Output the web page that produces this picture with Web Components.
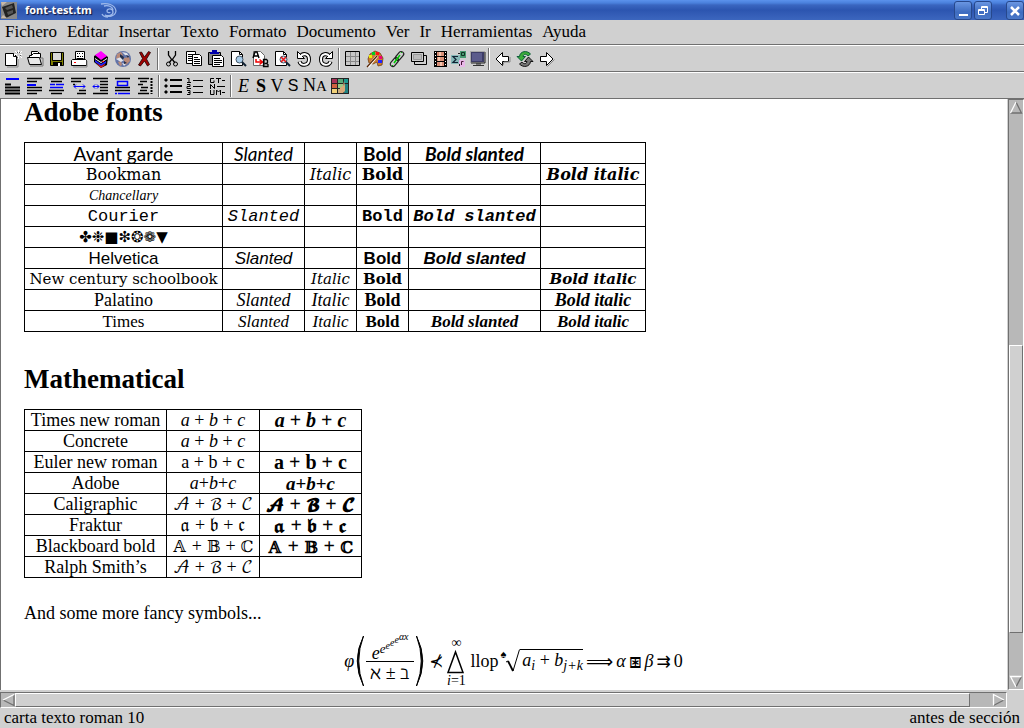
<!DOCTYPE html>
<html lang="es">
<head>
<meta charset="utf-8">
<title>font-test.tm</title>
<style>
  html, body { margin: 0; height: 100%; }
  body { font-family: "Liberation Serif", serif; color: #000; background: #d0d0d0; }
</style>
</head>
<body>
<app-window></app-window>

<script>
const ICONS = {
  new: `<path d="M2 4h8l3 3v9H2z" fill="#fff" stroke="#000" transform="translate(-.5 -.5)"/><path d="M9.500 3.500v3h3" fill="none" stroke="#000"/><path d="M3 17h11V8" fill="none" stroke="#888"/><path d="M14.500 0v3M14.500 6v3M10 4.500h3M16 4.500h2M11 1l2 2M16 6l2 2M18 1l-2 2" stroke="#fff"/><path d="M13 2h1v1h-1zM15 2h1v1h-1zM16 5h1v1h-1zM13 7h1v1h-1z" fill="#555"/>`,
  open: `<path d="M5.500 8V1.500h6l3 3V8" fill="#fff" stroke="#000"/><path d="M3.500 14V5.500h2l2-2h7v4" fill="#fff" stroke="#000"/><path d="M1.500 7.500h12l2 7h-12z" fill="#e8e8e8" stroke="#000"/><path d="M15 8h2v8H4" fill="none" stroke="#777"/>`,
  save: `<path d="M2 2h13v13H2z" fill="#808000" stroke="#000" transform="translate(.5 .5)"/><path d="M5 3h9v7H5z" fill="#d8d8d8"/><path d="M4.500 2.500v8h9v-8" fill="none" stroke="#000"/><path d="M5 12h9v4H5z" fill="#000"/><path d="M10 13h2v3h-2z" fill="#fff"/>`,
  print: `<path d="M5.500 9.500v-8h9v8" fill="#fff" stroke="#000"/><path d="M7 3h1v1H7zM9 3h1v1H9zM12 3h1v1h-1zM7 6h2v1H7zM10 6h1v1h-1zM12 6h1v1h-1z"/><path d="M2.500 9.500h13l1 1v5h-15v-5z" fill="#fff" stroke="#000"/><path d="M4 12h2v1H4z" fill="#f00"/><path d="M6.500 8.500h7" stroke="#000"/><path d="M3 17h14v-6" fill="none" stroke="#888"/>`,
  books: `<path d="M2 6l7-4 7 5-1 8-6 3-7-6z" fill="#000"/><path d="M3 5l6-4 6 5-6 4z" fill="#f0f"/><path d="M3 8l6 4 6-4v1l-6 4-6-4z" fill="#fff"/><path d="M3 10l6 4 5-3v2l-5 3-6-4z" fill="#22f"/><path d="M4 13l5 3 4-2v1l-4 3z" fill="#d22"/><path d="M10 11h2v1h-2z" fill="#f22"/>`,
  globe: `<circle cx="9" cy="9" r="8" fill="#6274a8"/><path d="M3 4l4-2 2 3-3 3-4 1zM10 8l5-1 1 4-4 4-2-3zM4 12l3-1 1 4-2 1z" fill="#b98a78"/><path d="M8 2l5 1 2 3-4-1zM2 9l5-2 3 3-3 2zM8 13l4 1-2 2z" fill="#dfe2ea"/><path d="M6 4l4 3-1 3-3-3zM12 5l3 1-1 2zM10 11l3 2-3 1z" fill="#26304a"/>`,
  close: `<path d="M3.500 2.500l2-.5 3 5 4-5.500 2 1-4 6.500 3 5.500-2 1.500-3-5-4 5-2-1 4-6.500z" fill="#a00000" stroke="#200" stroke-width=".8"/>`,
  cut: `<path d="M5.500 1v4l3.500 5M12.500 1v4L9 10M9 9l-3 4M9 9l3 4" fill="none" stroke="#000" stroke-width="1.300"/><circle cx="5.500" cy="14" r="2" fill="none" stroke="#000"/><circle cx="12.500" cy="14" r="2" fill="none" stroke="#000"/>`,
  copy: `<path d="M1.500 1.500h9v12h-9z" fill="#fff" stroke="#000"/><path d="M3 4.500h5M3 6.500h4M3 8.500h4M3 10.500h4" stroke="#000"/><path d="M7.500 4.500h7l2 2v9h-9z" fill="#fff" stroke="#000"/><path d="M9 7.500h4M9 9.500h6M9 11.500h6M9 13.500h6" stroke="#000"/>`,
  paste: `<path d="M1.500 2.500h12v12h-12z" fill="#888" stroke="#000"/><path d="M5 0h5v2h2v2H3V2h2z" fill="#00a"/><path d="M5.500 5.500h9l2 2v9h-11z" fill="#fff" stroke="#000"/><path d="M7 8.500h6M7 10.500h8M7 12.500h8M7 14.500h6" stroke="#000"/>`,
  preview: `<path d="M2.500 1.500h8l3 3v11h-11z" fill="#fff" stroke="#000"/><path d="M10.500 1.500v3h3" fill="none" stroke="#000"/><circle cx="10.500" cy="9.500" r="3.500" fill="#a8cdea" stroke="#456"/><path d="M13 12l4 4" stroke="#123" stroke-width="2"/>`,
  replace: `<path d="M2.500 1.500h7l4 4v10h-11z" fill="#fff" stroke="#666"/><path d="M2 8l2-6h2l2 6M3 6h4" fill="none" stroke="#000" stroke-width="1.400"/><path d="M5 9v3h6M8.500 9.500l3 2.500-3 2.500" fill="none" stroke="#e00" stroke-width="1.500"/><path d="M12.500 16.500v-7h3l1 1v2l-1 1h-2 2l1.500 1v2z" fill="none" stroke="#000" stroke-width="1.300"/>`,
  spell: `<path d="M2.500 1.500h8l3 3v11h-11z" fill="#fff" stroke="#000"/><path d="M10.500 1.500v3h3" fill="none" stroke="#000"/><circle cx="10.500" cy="9.500" r="3.500" fill="#cfe0ee" stroke="#456"/><path d="M8 7l5 5M13 7l-5 5" stroke="#e11" stroke-width="1.500"/><path d="M13 12l4 4" stroke="#123" stroke-width="2"/>`,
  undo: `<path d="M4.500 11.500c1 5 9.500 4.500 9.500-2C14 3 7.500 3 5.500 6.500" fill="none" stroke="#000" stroke-width="4"/><path d="M2.500 1.500v7h7z" fill="#fff" stroke="#000"/><path d="M4.500 11.500c1 5 9.500 4.500 9.500-2C14 3 7.500 3 5.500 6.500" fill="none" stroke="#fff" stroke-width="2"/>`,
  table: `<path d="M2 2h14v14H2z" fill="#c8c8c8"/><path d="M6.500 2v14M11.500 2v14M2 6.500h14M2 11.500h14" stroke="#888"/><path d="M1.500 1.500h14v14h-14z" fill="none" stroke="#000"/>`,
  palette: `<path d="M2 9l2-5 5-3 5 2 3 5-1 7-4 1-1-4-4 2-4-1z" fill="#c87c34" stroke="#744010" stroke-width=".8"/><path d="M3 5h3v3H3z" fill="#ee0"/><path d="M6 2h3v3H6z" fill="#0c2"/><path d="M10 2h3v3h-3z" fill="#f11"/><path d="M13 6h3v3h-3z" fill="#e07"/><path d="M12 10h4v3h-4z" fill="#22f"/><path d="M2 17l9-11" stroke="#fff" stroke-width="2.500"/><path d="M1 17l10-11" stroke="#520" stroke-width="1.200"/>`,
  link: `<g fill="none" stroke="#222" stroke-width="1.200" transform="rotate(40 9 9)"><rect x="6.500" y="0" width="5" height="10" rx="2.500"/><rect x="6.500" y="8" width="5" height="10" rx="2.500"/></g><path d="M6 13l6-8" stroke="#0c0" stroke-width="1.500"/><path d="M4 16l1-1M13 3l1-1" stroke="#0c0"/>`,
  rects: `<path d="M4.500 5.500h12v9h-12z" fill="none" stroke="#000"/><path d="M1.500 2.500h12v9h-12z" fill="#ccc" stroke="#000"/><path d="M3.500 4.500h8v5h-8z" fill="#bbb" stroke="#999"/>`,
  film: `<path d="M3 1h13v16H3z"/><path d="M6 2h7v4H6zM6 7h7v4H6zM6 12h7v4H6z" fill="#d89078"/><path d="M8 2h2v4H8zM7 7h2v4H7zM9 12h2v4H9z" fill="#f4c4ac"/><path d="M4.500 2v15M14.500 2v15" stroke="#fff" stroke-dasharray="1 2"/>`,
  math: `<path d="M1 5h9v9H1z" fill="#88b8b8"/><path d="M8 6.500H3l3 3-3 3h5" fill="none" stroke="#123" stroke-width="1.200"/><path d="M10 1h6v7h-6z" fill="#4a9a70"/><path d="M11.500 2.500h3v3h-3z" fill="none" stroke="#132"/><path d="M9 10h6v7H9z" fill="#e8b8e8"/><path d="M11.500 15v-3.500h2" fill="none" stroke="#413"/><path d="M8 3h2v1H8zM9 14h1v2H9z" fill="#222"/>`,
  monitor: `<path d="M1 1h15v12H1z" fill="#aaa"/><path d="M2 2h13v10H2z" fill="#3d3d66"/><path d="M3 3h10v8H3z" fill="#5c5c8c"/><path d="M7 13h5v2H7z" fill="#777"/><path d="M4 15h11v1H4z" fill="#333"/><path d="M16 2v11H2" fill="none" stroke="#222"/>`,
  left: `<path d="M8.500 2.500v4h6v5h-6v4L2 9z" fill="#fff" stroke="#000"/><path d="M9 15l1-3h6V7" fill="none" stroke="#888"/>`,
  refresh: `<path d="M1 6.500h2.500C4 1 11 0 14.500 4L12 6C10 3.500 7.500 4 7 6.500h2.500L5.500 11z" fill="#3cac3c" stroke="#053" stroke-width=".9"/><path d="M17 11.500h-2.500C14 17 7 18 3.500 14L6 12c2 2.500 4.500 2 5-.5H8.500L12.500 7z" fill="#777" stroke="#000" stroke-width=".9"/>`,
  right: `<path d="M8.500 2.500v4h-6v5h6v4L15 9z" fill="#fff" stroke="#000"/><path d="M9.500 16.500l7-7" fill="none" stroke="#888"/>`,
  title: `<path d="M1 7.500h6M1 10.500h15M1 13.500h15M1 16.500h15" stroke="#000" stroke-width="2"/><path d="M2 1h13v2H2z" fill="#00f"/>`,
  sect: `<path d="M1 1.500h15M1 4.500h10M1 10.500h15M1 13.500h15M1 16.500h10" stroke="#000" stroke-width="1.500"/><path d="M1 7h9v2H1z" fill="#00f"/>`,
  center: `<path d="M1 1.500h15M3 4.500h11M1 13.500h15M3 16.500h11" stroke="#000" stroke-width="1.500"/><path d="M2 7.500h5M8 7.500h8M2 10.500h13" stroke="#00f" stroke-width="1.500"/>`,
  indent: `<path d="M1 1.500h15M1 4.500h10M9 13.500h7M7 16.500h9M3 7.500h2" stroke="#000" stroke-width="1.500"/><path d="M4 9.500h11M6 7.500l-2 2 2 2M13 7.500l2 2-2 2" fill="none" stroke="#00f"/>`,
  inward: `<path d="M1 1.500h15M1 16.500h15M8 4.500h8M8 7.500h8M8 10.500h8M8 13.500h8" stroke="#000" stroke-width="1.500"/><path d="M1 9.500h6M3 7.500l-2 2 2 2M5 7.500l2 2-2 2" fill="none" stroke="#00f"/>`,
  frame: `<path d="M1 1.500h15M1 10.500h15M1 13.500h15" stroke="#000" stroke-width="1.500"/><path d="M3.500 4.500h10v4h-10zM1 16.500h2M4 16.500h12" fill="none" stroke="#00f" stroke-width="1.500"/>`,
  parts: `<path d="M2 1.500h11M4 4.500h7M2 7.500h5M5 10.500h7M4 13.500h7M2 16.500h11" stroke="#000" stroke-width="1.500"/><path d="M15.500 1v16" stroke="#000" stroke-width="2" stroke-dasharray="2 1"/>`,
  bullets: `<path d="M0 3l2-2 2 2-2 2zM0 9l2-2 2 2-2 2zM0 15l2-2 2 2-2 2zM6 2h12v2H6zM6 8h12v2H6zM6 14h12v2H6z"/>`,
  numbers: `<path d="M7 3.500h10M7 9.500h10M7 15.500h10M1 1.500h2v4M1 5.500h4M1 7.500h3v2H1v2h4M1 13.500h3v2H2h2v2H1" fill="none" stroke="#000"/>`,
  terms: `<path d="M6 1.500H2.500v4H6v-2M8 1.500h5M10.500 1v5M14 3.500h3M2.500 12V7.500l4 4V7M9 9.500h8M2.500 13v4.500H6V13M8.500 18v-5l2 2 2-2v5M14 15.500h3" fill="none" stroke="#000"/>`,
  colors: `<path d="M0 1h18v16H0z" fill="#222"/><path d="M1 2h5v4H1z" fill="#a83058"/><path d="M7 2h5v4H7z" fill="#58a878"/><path d="M13 2h4v4h-4z" fill="#189890"/><path d="M1 7h5v4H1z" fill="#d06040"/><path d="M7 7h5v4H7z" fill="#98c888"/><path d="M13 7h4v9h-4z" fill="#208080"/><path d="M1 12h5v4H1z" fill="#f0d078"/><path d="M7 12h5v4H7z" fill="#c8b080"/><path d="M13 4l1 5v5l-2 2H8l1-5 3-2z" fill="#d8a878"/>`
};
ICONS.redo = `<g transform="translate(18 0) scale(-1 1)">${ICONS.undo}</g>`;

const define = (name, html, setup) => {
  const template = document.createElement('template');
  template.innerHTML = html;
  customElements.define(name, class extends HTMLElement {
    constructor() {
      super();
      this.attachShadow({ mode: 'open' }).append(template.content.cloneNode(true));
    }
    connectedCallback() { if (setup) setup(this, this.shadowRoot); }
  });
};

define('title-bar', `
<style>
  :host { display: flex; align-items: center; height: 20px; padding-left: 1px; color: #fff;
    background: linear-gradient(#5b92ec 0, #4a80dc 3px, #3a66c0 5px, #2c55b0 10px, #3c66be 100%); }
  h1 { margin: 0 8px; font: bold 11px/16px "Open Sans", sans-serif; text-shadow: 1px 1px 1px #113; }
  .space { flex: 1; }
  button { width: 18px; height: 19px; margin: 0 2px 0 0; padding: 0; border: 1px solid #27488c; border-radius: 3px;
    background: linear-gradient(#6a96e2, #3e6cc0 60%, #4a78c8); }
  button:last-child { margin: 0 0 0 12px; }
  svg { display: block; }
</style>
<svg width="16" height="17" viewBox="0 0 16 17"><path d="M0 0h16v17H0z" fill="#888"/><path d="M1 5l12-4 2 10-10 5z" fill="#222"/><path d="M4 6l7-3 1 3-6 2zM6 10l6-2v3l-5 2z" fill="#555"/><path d="M0 0h6L1 4zM2 13l4 3H0z" fill="#c8b8a8"/></svg>
<h1>font-test.tm</h1>
<svg width="18" height="16" viewBox="0 0 18 16" fill="none" stroke="#9db8ea" stroke-width="1.300"><path d="M1 2c6-1 14 0 15 7-1 6-8 6-11 4 3 1 8 1 8-3S7 6 7 9c0 2 3 2 3 1M4 4c5-1 9 1 9 4M2 12c1 2 4 3 6 3"/></svg>
<span class="space"></span>
<button aria-label="Minimizar"><svg width="16" height="17"><path d="M4 12h9v2H4z" fill="#fff"/></svg></button>
<button aria-label="Restaurar"><svg width="16" height="17" fill="none" stroke="#fff"><path d="M6.500 7V4.500h6v6H10M3.500 7.500h6v5h-6zM3.500 8.500h6M6.500 5.500h6"/></svg></button>
<button aria-label="Cerrar"><svg width="16" height="17"><path d="M4 5l8 8M12 5l-8 8" stroke="#fff" stroke-width="2.500"/></svg></button>`);

define('menu-bar', `
<style>
  :host { display: block; border-bottom: 1px solid #707070; }
  nav { display: flex; gap: 10px; padding-left: 5px; height: 24px; }
  button { border: 0; padding: 0; background: none; font: 17px/24px "Liberation Serif", serif; color: #000; }
</style>
<nav></nav>`, (el, root) => {
  root.querySelector('nav').innerHTML = el.getAttribute('items').split(',').map(t => `<button>${t}</button>`).join('');
});

define('tool-bar', `
<style>
  :host { display: flex; align-items: center; height: 25px; padding-left: 2px;
    border-top: 1px solid #fff; border-bottom: 1px solid #707070; }
</style>
<slot></slot>`);

define('tool-sep', `
<style>
  :host { width: 0; height: 22px; margin: 0 2px 0 1px; border-left: 1px solid #707070; border-right: 1px solid #fff; }
  :host([wide]) { margin: 0 2px; }
</style>`);

define('tool-button', `
<style>
  :host { display: block; width: 22px; }
  :host([narrow]) { width: 19px; }
  :host([snug]) { width: 16px; }
  :host([broad]) { width: 28px; }
  button { display: grid; place-items: center; width: 100%; height: 22px; border: 0; padding: 0; background: none; color: #000;
    font: 18px/20px "Liberation Serif", serif; }
  :host([look=em]) button { font-style: italic; }
  :host([look=strong]) button { font-weight: bold; }
  :host([look=sans]) button { font-family: "Liberation Sans", sans-serif; font-size: 16px; }
  small { font-size: 13px; }
</style>
<button></button>`, (el, root) => {
  const button = root.querySelector('button');
  const icon = el.getAttribute('icon');
  if (icon) {
    button.setAttribute('aria-label', icon);
    button.innerHTML = `<svg width="18" height="18" viewBox="0 0 18 18">${ICONS[icon]}</svg>`;
  } else button.innerHTML = '<span><slot></slot></span>';
});

define('scroll-bar', `
<style>
  :host { display: flex; background: #b8b8b8; box-sizing: border-box; border: 1px solid #707070; border-right-color: #fff; border-bottom-color: #fff; }
  :host([vertical]) { flex-direction: column; width: 16px; }
  :host([horizontal]) { height: 16px; }
  button { flex: none; width: 14px; height: 14px; border: 0; padding: 0; background: none; }
  svg { display: block; }
  .track { flex: 1; display: flex; flex-direction: inherit; }
  .thumb { box-sizing: border-box; background: #d0d0d0; border: 1px solid #fff; border-right-color: #707070; border-bottom-color: #707070; }
</style>
<button aria-label="Retroceder"></button><div class="track"><div class="before"></div><div class="thumb"></div></div><button aria-label="Avanzar"></button>`,
(el, root) => {
  const v = el.hasAttribute('vertical');
  const [first, last] = root.querySelectorAll('button');
  const draw = inner => `<svg width="14" height="14" fill="none" stroke-width="1.300">${inner}</svg>`;
  first.innerHTML = draw(v ? '<path d="M7 2l5.500 11H1.500" stroke="#707070"/><path d="M1.500 13L7 2" stroke="#fff"/>'
                           : '<path d="M2 7l11 5.500V2" stroke="#707070"/><path d="M13 1.500L2 7" stroke="#fff"/>');
  last.innerHTML = draw(v ? '<path d="M12.500 1.500L7 12" stroke="#707070"/><path d="M7 12L1.500 1.500h11" stroke="#fff"/>'
                          : '<path d="M12 7L1.500 12.500" stroke="#707070"/><path d="M1.500 12.500v-11L12 7" stroke="#fff"/>');
  root.querySelector('.before').style.flex = el.getAttribute('before');
  root.querySelector('.thumb').style.flex = el.getAttribute('size');
  root.querySelector('.track').insertAdjacentHTML('beforeend', `<div style="flex:${el.getAttribute('after')}"></div>`);
});

define('doc-section', `
<style>
  :host { display: block; }
  h2 { margin: 0 0 18px; font: bold 27px/24px "Liberation Serif", serif; }
</style>
<h2></h2><slot></slot>`, (el, root) => { root.querySelector('h2').textContent = el.getAttribute('heading'); });

const TABLE_CSS = `
  :host { display: block; }
  table { border-collapse: collapse; table-layout: fixed; }
  td { border: 1px solid #000; padding: 0; height: 20px; line-height: 19px; text-align: center; white-space: nowrap; font-size: 18px; }`;

define('font-table', `
<style>${TABLE_CSS}
  table { width: 622px; }
  .s, .i, .bs, .bi { font-style: italic; }
  .b, .bs, .bi { font-weight: bold; }
  .avant td { font-family: Lato, sans-serif; font-size: 19px; }
  .book td { font-family: "DejaVu Serif", serif; font-size: 16px; }
  .chan td { font-style: italic; font-size: 14px; }
  .cour td { font-family: "Liberation Mono", monospace; font-size: 17px; }
  .ding td { font-family: "DejaVu Sans", sans-serif; font-size: 15px; }
  .helv td { font-family: "Liberation Sans", sans-serif; font-size: 17px; }
  .cent td { font-family: "DejaVu Serif", serif; font-size: 15px; }
  .time td { font-size: 17px; }
</style>
<table><colgroup><col style="width:198px"><col style="width:82px"><col style="width:52px"><col style="width:52px"><col style="width:132px"><col style="width:105px"></colgroup><tbody></tbody></table>`,
(el, root) => {
  const rows = [
    ['avant', 'Avant garde', 's b bs'], ['book', 'Bookman', 'i b bi'], ['chan', 'Chancellary', ''],
    ['cour', 'Courier', 's b bs'], ['ding', '✤❉■❇❂❁▼', ''], ['helv', 'Helvetica', 's b bs'],
    ['cent', 'New century schoolbook', 'i b bi'], ['pala', 'Palatino', 's i b bi'], ['time', 'Times', 's i b bs bi']];
  const styles = { s: 'Slanted', i: 'Italic', b: 'Bold', bs: 'Bold slanted', bi: 'Bold italic' };
  root.querySelector('tbody').innerHTML = rows.map(([cls, name, has]) =>
    `<tr class="${cls}"><td>${name}</td>${Object.keys(styles).map(k =>
      `<td class="${k}">${has.split(' ').includes(k) ? styles[k] : ''}</td>`).join('')}</tr>`).join('');
});

define('math-table', `
<style>${TABLE_CSS}
  table { width: 338px; }
  .it i { font-style: italic; }
  td:nth-child(3) { font-weight: bold; font-size: 20px; }
  .tight td:nth-child(3) { font-size: 19px; }
  .tex i { font-family: "DejaVu Math TeX Gyre", "DejaVu Sans", serif; font-style: normal; font-size: 16px; line-height: 0; }
</style>
<table><colgroup><col style="width:142px"><col style="width:93px"><col style="width:102px"></colgroup><tbody></tbody></table>`,
(el, root) => {
  const rows = [
    ['it', 'Times new roman', 'abc', 'abc'], ['it', 'Concrete', 'abc', ''], ['up', 'Euler new roman', 'abc', 'abc'],
    ['it tight', 'Adobe', 'abc', 'abc'], ['tex', 'Caligraphic', '𝒜ℬ𝒞', '𝓐𝓑𝓒'], ['tex', 'Fraktur', '𝔞𝔟𝔠', '𝖆𝖇𝖈'],
    ['tex', 'Blackboard bold', '𝔸𝔹ℂ', '𝔸𝔹ℂ'], ['tex', 'Ralph Smith’s', '𝒜ℬ𝒞', '']];
  root.querySelector('tbody').innerHTML = rows.map(([cls, name, a, b]) => {
    const tag = cls === 'up' ? 'span' : 'i';
    const sum = t => [...t].map(c => `<${tag}>${c}</${tag}>`).join(cls.includes('tight') ? '+' : ' + ');
    return `<tr class="${cls}"><td>${name}</td><td>${sum(a)}</td><td>${sum(b)}</td></tr>`;
  }).join('');
});

define('math-formula', `
<style>
  :host { display: flex; justify-content: center; align-items: center; height: 52px; font-size: 18px; line-height: 20px; white-space: nowrap; }
  svg { display: block; fill: none; stroke: #000; }
  i { font-style: italic; }
  .frac, .op { display: flex; flex-direction: column; align-items: center; }
  .frac { margin: 0 1px; }
  .frac > :first-child { border-bottom: 1px solid #000; height: 26px; line-height: 34px; box-sizing: border-box; width: 48px; text-align: center; }
  .frac > :last-child { height: 25px; line-height: 22px; }
  sup { font-size: 13px; vertical-align: 6px; line-height: 0; }
  sup sup { font-size: 10px; vertical-align: 4px; }
  sup sup sup { vertical-align: 3px; }
  .op { font-size: 14px; line-height: 13px; margin: 0 4px 0 0; }
  .root { display: flex; margin-left: 2px; }
  .under { border-top: 1px solid #000; height: 21px; line-height: 20px; padding-left: 2px; }
  sub { font-size: 14px; vertical-align: -4px; line-height: 0; }
  .sym { font-family: "DejaVu Sans", sans-serif; font-size: 17px; }
  .long { font-size: 19px; }
  .idx { font-size: 11px; line-height: 10px; height: 20px; }
  .rel { margin: 0 3px; }
  .boxed { font-size: 20px; }
</style>
<i>φ</i>
<svg width="11" height="52" viewBox="0 0 11 52"><path d="M9.500 1Q-3 26 9.500 51Q0 26 9.500 1" fill="#000"/></svg>
<span class="frac"><span><i>e<sup>e<sup>e<sup>e<sup>e<sup>αx</sup></sup></sup></sup></sup></i></span><span>ℵ ± ℶ</span></span>
<svg width="11" height="52" viewBox="0 0 11 52"><path d="M1.500 1Q14 26 1.500 51Q11 26 1.500 1" fill="#000"/></svg>
<span class="sym rel">⊀</span>
<span class="op"><span>∞</span><svg width="20" height="25" viewBox="0 0 20 25"><path d="M2 23.500L9.500 3L17 23.500z" stroke-width="1.500"/></svg><span><i>i</i>=1</span></span>
<span>llop</span>
<span class="root"><span class="idx">♠</span><svg width="14" height="24" viewBox="0 0 14 24"><path d="M0 13l2-1"/><path d="M2 12l5 10" stroke-width="1.800"/><path d="M7 22L13.500 .5"/></svg><span class="under"><i>a<sub>i</sub></i> + <i>b<sub>j+k</sub></i></span></span>
<span class="sym rel long">⟹</span><i>α</i><span class="sym rel boxed">⧆</span><i>β</i><span class="sym rel">⇉</span><span>0</span>`);

define('status-bar', `
<style>
  :host { display: flex; justify-content: space-between; height: 20px; padding: 0 4px; font: 17px/20px "Liberation Serif", serif; }
</style>
<slot name="left"></slot><slot name="right"></slot>`);

define('app-window', `
<style>
  :host { display: flex; flex-direction: column; min-height: 100vh; background: #d0d0d0; }
  .work { flex: 1; min-height: 0; display: grid; grid-template-columns: minmax(0, 1fr) 16px; column-gap: 1px; row-gap: 2px; grid-template-rows: minmax(0, 1fr) 16px; }
  main { background: #fff; border-left: 1px solid #707070; padding: 1px 4px 0 23px; min-height: 0; }
  doc-section + doc-section { margin-top: 35px; }
  p { margin: 24px 0 11px; font-size: 18px; line-height: 22px; }
</style>
<title-bar></title-bar>
<menu-bar items="Fichero,Editar,Insertar,Texto,Formato,Documento,Ver,Ir,Herramientas,Ayuda"></menu-bar>
<tool-bar>
  ${['new','open','save','print','books','globe','close'].map(n => `<tool-button icon="${n}"></tool-button>`).join('')}
  <tool-sep></tool-sep>
  ${['cut','copy','paste','preview','replace','spell','undo','redo'].map(n => `<tool-button icon="${n}"></tool-button>`).join('')}
  <tool-sep></tool-sep>
  ${['table','palette','link','rects'].map(n => `<tool-button icon="${n}"></tool-button>`).join('')}
  ${['film','math','monitor'].map(n => `<tool-button narrow icon="${n}"></tool-button>`).join('')}
  <tool-sep></tool-sep>
  ${['left','refresh','right'].map(n => `<tool-button icon="${n}"></tool-button>`).join('')}
</tool-bar>
<tool-bar>
  ${['title','sect','center','indent','inward','frame','parts'].map(n => `<tool-button icon="${n}"></tool-button>`).join('')}
  <tool-sep wide></tool-sep>
  ${['bullets','numbers','terms'].map(n => `<tool-button icon="${n}"></tool-button>`).join('')}
  <tool-sep wide></tool-sep>
  <tool-button narrow look="em">E</tool-button><tool-button snug look="strong">S</tool-button><tool-button snug>V</tool-button><tool-button snug look="sans">S</tool-button><tool-button broad>N<small>A</small></tool-button>
  <tool-button icon="colors"></tool-button>
</tool-bar>
<div class="work">
  <main>
    <doc-section heading="Adobe fonts"><font-table></font-table></doc-section>
    <doc-section heading="Mathematical"><math-table></math-table></doc-section>
    <p>And some more fancy symbols...</p>
    <math-formula></math-formula>
  </main>
  <scroll-bar vertical before="232" size="288" after="42"></scroll-bar>
  <scroll-bar horizontal before="0" size="955" after="22"></scroll-bar>
</div>
<status-bar><span slot="left">carta texto roman 10</span><span slot="right">antes de sección</span></status-bar>`);
</script>
</body>
</html>
